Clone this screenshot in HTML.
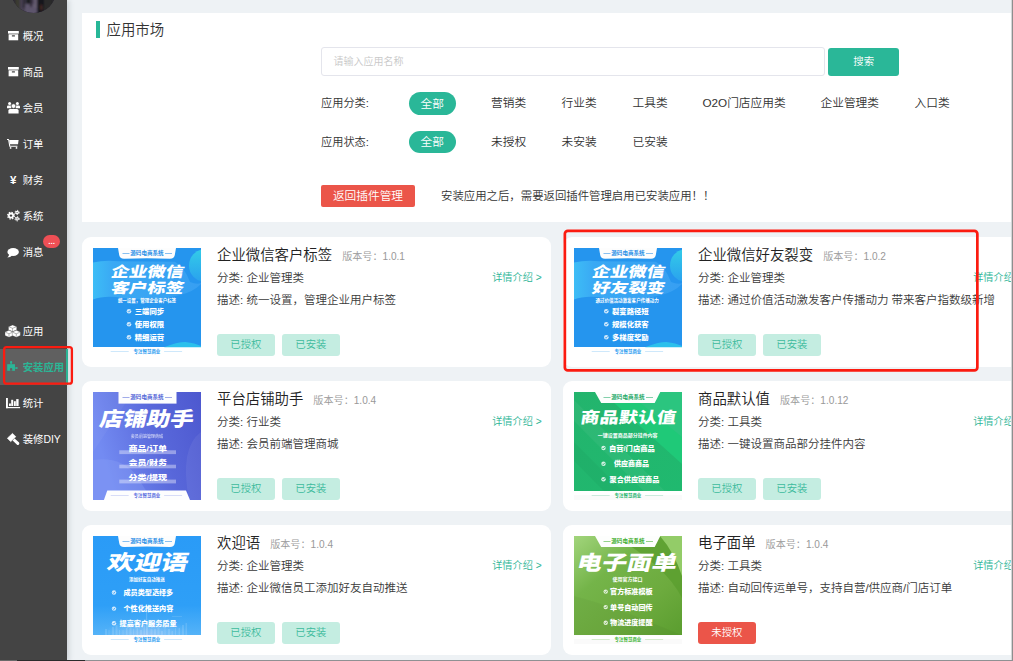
<!DOCTYPE html>
<html lang="zh-CN">
<head>
<meta charset="utf-8">
<title>应用市场</title>
<style>
*{box-sizing:border-box;margin:0;padding:0}
html,body{width:1013px;height:661px;overflow:hidden}
body{position:relative;background:#eef2f5;font-family:"Liberation Sans","Noto Sans CJK SC",sans-serif;color:#333;font-size:10.8px;font-weight:350}
.abs{position:absolute}
/* sidebar */
#side{position:absolute;left:0;top:0;width:67px;height:661px;background:#444;box-shadow:2px 0 5px rgba(120,130,140,.28)}
#avatar{position:absolute;left:10.5px;top:-32.5px;width:45.3px;height:45.3px;border-radius:50%;overflow:hidden;background:#2a2733}
.nav{position:absolute;left:0;width:67px;height:36px;color:#fff;font-size:10.4px;line-height:36px;font-weight:400}
.nav svg{position:absolute;fill:currentColor;overflow:visible}
.nav .yen{position:absolute;left:10px;top:-1px;font-size:11.5px;font-weight:700;font-family:"Liberation Sans",sans-serif}
.nav span{position:absolute;left:22.7px;top:0.8px;white-space:nowrap}
.nav.on{background:#606060;color:#2bb596;border-right:2px solid #2bb596;font-weight:700;width:68px}
#badge{position:absolute;left:43px;top:234.8px;width:17.3px;height:13px;border-radius:6.5px;background:#ee4f55;color:#fff;font-size:8px;line-height:14px;text-align:center;font-weight:700}
/* top panel */
#panel{position:absolute;left:82px;top:13px;width:929px;height:209px;background:#fff}
#bar{position:absolute;left:96px;top:21px;width:3.8px;height:17px;background:#27b797}
#ttl{position:absolute;left:106.5px;top:19.5px;font-size:14.4px;line-height:21px;color:#333}
#inp{position:absolute;left:321px;top:47px;width:503.5px;height:29px;border:1px solid #e4e5ec;border-radius:3px;background:#fff;color:#c8c8c8;font-size:10px;line-height:27px;padding-left:11.5px}
#sbtn{position:absolute;left:828.3px;top:47.5px;width:70.7px;height:28.5px;background:#2ab798;border-radius:3px;color:#fff;font-size:10.4px;line-height:28.5px;text-align:center}
.lbl{position:absolute;left:321px;font-size:11.2px;line-height:22px;height:22px;color:#333;white-space:nowrap}
.it{position:absolute;font-size:11.7px;line-height:22px;height:22px;color:#333;white-space:nowrap}
.pill{position:absolute;left:408.5px;width:47.5px;height:22.5px;border-radius:12px;background:#2ab798;color:#fff;font-size:11.7px;line-height:22.5px;text-align:center}
#rbtn{position:absolute;left:321px;top:185px;width:94px;height:22px;border-radius:2px;background:#eb5549;color:#fff;font-size:11.7px;line-height:22px;text-align:center}
#note{position:absolute;left:441px;top:185px;font-size:11.4px;line-height:22px;color:#333;white-space:nowrap}
/* cards */
.card{position:absolute;width:469px;height:129.7px;background:#fff;border-radius:9px}
.card .t{position:absolute;left:135px;top:7px;font-size:14.4px;line-height:22px;color:#222;white-space:nowrap}
.card .t i{font-style:normal;font-size:10.1px;color:#999;margin-left:10px}
.card .l{position:absolute;left:135px;font-size:11.5px;line-height:22px;color:#3a3a3a;white-space:nowrap}
.card .more{position:absolute;left:410.2px;top:30px;font-size:10.2px;line-height:22px;color:#2bb596;white-space:nowrap}
.tag{position:absolute;top:97px;width:57.8px;height:21.5px;border-radius:3px;background:#c4ede1;color:#3dbb9d;font-size:10.4px;line-height:21.5px;text-align:center}
.tag.red{background:#eb5549;color:#fff}
.pic{position:absolute;left:11px;top:11px;width:108px;height:108px;overflow:hidden;background:#fff}
</style>
</head>
<body>
<!-- SIDEBAR -->
<div id="side">
  <div id="avatar"><svg width="46" height="46" viewBox="0 0 46 46"><defs><filter id="bl"><feGaussianBlur stdDeviation="1"/></filter></defs><rect width="46" height="46" fill="#2b2732"/><g filter="url(#bl)"><rect x="4" y="28" width="8" height="18" fill="#3b3a33"/><rect x="9" y="30" width="14" height="16" fill="#463f52"/><rect x="14" y="36" width="12" height="10" fill="#5d546c"/><rect x="23" y="28" width="3" height="12" fill="#655c70"/><rect x="26" y="30" width="7" height="16" fill="#19171c"/><rect x="29.8" y="37" width="1" height="5" fill="#6a3428"/><rect x="33" y="30" width="9" height="12" fill="#2c2b2a"/><rect x="12" y="30" width="2" height="10" fill="#25222a"/><rect x="19" y="30" width="2" height="9" fill="#2a2630"/><rect x="15" y="28" width="4" height="8" fill="#1d1b20"/></g></svg></div>
  <div class="nav" style="top:18.5px"><svg style="left:7.5px;top:12.5px;width:10.8px;height:9.3px" viewBox="0 0 108 93" preserveAspectRatio="none"><rect x="0" y="0" width="108" height="26"/><rect x="6" y="33" width="96" height="60"/><rect x="38" y="43" width="32" height="11" rx="5" fill="#444"/></svg><span>概况</span></div>
  <div class="nav" style="top:54.5px"><svg style="left:7.5px;top:12.5px;width:10.8px;height:9.3px" viewBox="0 0 108 93" preserveAspectRatio="none"><rect x="0" y="0" width="108" height="26"/><rect x="6" y="33" width="96" height="60"/><rect x="38" y="43" width="32" height="11" rx="5" fill="#444"/></svg><span>商品</span></div>
  <div class="nav" style="top:90.5px"><svg style="left:6.8px;top:11.3px;width:13.0px;height:11.6px" viewBox="0 0 130 116" preserveAspectRatio="none"><circle cx="26" cy="16" r="15"/><circle cx="104" cy="16" r="15"/><path d="M0 62V46Q0 34 12 34H44V62Z"/><path d="M130 62V46Q130 34 118 34H86V62Z"/><circle cx="65" cy="41" r="23" stroke="#444" stroke-width="6"/><path d="M14 115V86Q14 71 30 71H100Q116 71 116 86V115Z"/></svg><span>会员</span></div>
  <div class="nav" style="top:126.5px"><svg style="left:7.3px;top:12.4px;width:11.6px;height:9.7px" viewBox="0 0 100 84" preserveAspectRatio="none"><path d="M0 0H14L20 9L28 58H90V68H20L10 8H0Z"/><path d="M19 9H100L95 46H25Z"/><circle cx="31" cy="77" r="7.5"/><circle cx="82" cy="77" r="7.5"/></svg><span>订单</span></div>
  <div class="nav" style="top:162.5px"><b class="yen">¥</b><span>财务</span></div>
  <div class="nav" style="top:198.5px"><svg style="left:6.7px;top:11.4px;width:12.4px;height:11.3px" viewBox="0 0 124 113" preserveAspectRatio="none"><circle cx="40" cy="56" r="34" fill="none" stroke="currentColor" stroke-width="12" stroke-dasharray="14.69 12.02"/><circle cx="40" cy="56" r="30"/><circle cx="40" cy="56" r="12" fill="#444"/><circle cx="101" cy="25" r="21" fill="none" stroke="currentColor" stroke-width="10" stroke-dasharray="12.10 9.90"/><circle cx="101" cy="25" r="18"/><circle cx="101" cy="25" r="6" fill="#444"/><circle cx="101" cy="88" r="21" fill="none" stroke="currentColor" stroke-width="10" stroke-dasharray="12.10 9.90"/><circle cx="101" cy="88" r="18"/><circle cx="101" cy="88" r="6" fill="#444"/></svg><span>系统</span></div>
  <div class="nav" style="top:234.5px"><svg style="left:6.7px;top:13.0px;width:11.9px;height:9.5px" viewBox="0 0 120 95" preserveAspectRatio="none"><ellipse cx="62" cy="40" rx="58" ry="40"/><path d="M22 60Q20 84 4 94Q34 92 52 74Z"/></svg><span>消息</span></div>
  <div class="nav" style="top:313.0px"><svg style="left:5.2px;top:11.6px;width:15.3px;height:12.3px" viewBox="0 0 153 123" preserveAspectRatio="none"><polygon points="76.0,0.0 117.0,16.5 117.0,49.5 76.0,66.0 35.0,49.5 35.0,16.5" stroke="#444" stroke-width="3"/><line x1="76" y1="33" x2="110.9" y2="19.0" stroke="#444" stroke-width="5" opacity=".8"/><line x1="76" y1="33" x2="76.0" y2="61.1" stroke="#444" stroke-width="5" opacity=".8"/><line x1="76" y1="33" x2="41.1" y2="19.0" stroke="#444" stroke-width="5" opacity=".8"/><polygon points="40.0,53.0 80.0,70.5 80.0,105.5 40.0,123.0 0.0,105.5 0.0,70.5" stroke="#444" stroke-width="3"/><line x1="40" y1="88" x2="74.0" y2="73.1" stroke="#444" stroke-width="5" opacity=".8"/><line x1="40" y1="88" x2="40.0" y2="117.8" stroke="#444" stroke-width="5" opacity=".8"/><line x1="40" y1="88" x2="6.0" y2="73.1" stroke="#444" stroke-width="5" opacity=".8"/><polygon points="113.0,53.0 153.0,70.5 153.0,105.5 113.0,123.0 73.0,105.5 73.0,70.5" stroke="#444" stroke-width="3"/><line x1="113" y1="88" x2="147.0" y2="73.1" stroke="#444" stroke-width="5" opacity=".8"/><line x1="113" y1="88" x2="113.0" y2="117.8" stroke="#444" stroke-width="5" opacity=".8"/><line x1="113" y1="88" x2="79.0" y2="73.1" stroke="#444" stroke-width="5" opacity=".8"/></svg><span>应用</span></div>
  <div class="nav on" style="top:349.0px"><svg style="left:7.3px;top:11.9px;width:10.9px;height:10.0px" viewBox="0 0 109 100" preserveAspectRatio="none"><rect x="2" y="32" width="78" height="66"/><circle cx="41" cy="12.5" r="11.5"/><rect x="35" y="18" width="12" height="16"/><circle cx="97.5" cy="70.5" r="10"/><rect x="78" y="65" width="14" height="11"/><path d="M29.5 98V80Q29.5 70 41 70Q52.5 70 52.5 80V98Z" fill="#606060"/></svg><span>安装应用</span></div>
  <div class="nav" style="top:385.0px"><svg style="left:5.9px;top:12.8px;width:14.1px;height:10.2px" viewBox="0 0 141 102" preserveAspectRatio="none"><rect x="0" y="0" width="19" height="102"/><rect x="0" y="90" width="141" height="12"/><rect x="30" y="55" width="19" height="25"/><rect x="52" y="18" width="20" height="62"/><rect x="79" y="32" width="19" height="48"/><rect x="102" y="11" width="24" height="69"/></svg><span>统计</span></div>
  <div class="nav" style="top:421.0px"><svg style="left:6.8px;top:11.9px;width:12.5px;height:12.0px" viewBox="0 0 125 120" preserveAspectRatio="none"><polygon points="4,52 55,4 88,37 37,86" stroke="currentColor" stroke-width="7" stroke-linejoin="round"/><path d="M56 76L76 56L121 96Q128 110 117 117Q105 124 98 115Z"/></svg><span>装修DIY</span></div>
  <div id="badge">...</div>
</div>
<!-- TOP PANEL -->
<div id="panel"></div>
<div id="bar"></div>
<div id="ttl">应用市场</div>
<div id="inp">请输入应用名称</div>
<div id="sbtn">搜索</div>

<div class="lbl" style="top:91.9px">应用分类:</div>
<div class="pill" style="top:91.9px;height:23px;line-height:23px">全部</div>
<div class="it" style="left:491px;top:91.9px">营销类</div>
<div class="it" style="left:561.5px;top:91.9px">行业类</div>
<div class="it" style="left:632.5px;top:91.9px">工具类</div>
<div class="it" style="left:702.5px;top:91.9px">O2O门店应用类</div>
<div class="it" style="left:820.5px;top:91.9px">企业管理类</div>
<div class="it" style="left:914.5px;top:91.9px">入口类</div>

<div class="lbl" style="top:130.5px">应用状态:</div>
<div class="pill" style="top:130.8px;height:22.3px;line-height:22.3px">全部</div>
<div class="it" style="left:491px;top:130.5px">未授权</div>
<div class="it" style="left:561.5px;top:130.5px">未安装</div>
<div class="it" style="left:632.5px;top:130.5px">已安装</div>

<div id="rbtn">返回插件管理</div>
<div id="note">安装应用之后，需要返回插件管理启用已安装应用！！</div>

<!-- CARDS -->
<div class="card" style="left:82px;top:237px">
  <div class="pic" id="p1"><svg width="108" height="108" viewBox="0 0 108 108" font-family="Liberation Sans,Noto Sans CJK SC,sans-serif"><defs><linearGradient id="cy1" x1="0" y1="0" x2="0" y2="1"><stop offset="0" stop-color="#33cbe8"/><stop offset="1" stop-color="#2aa2ee"/></linearGradient><linearGradient id="wv1" x1="0" y1="0" x2="1" y2="0"><stop offset="0" stop-color="#3dbdf6"/><stop offset=".18" stop-color="#3aa9f4"/><stop offset="1" stop-color="#379ff2"/></linearGradient></defs><rect width="108" height="108" fill="#fff"/><rect width="108" height="99" fill="#2595ee"/><path d="M0 14.4Q12 12 25 13.3L82 13.8Q92 20 97 34Q104 37 108 35V36Q100 44 87 47Q60 54 30 50Q12 47 0 51.5Z" fill="url(#wv1)"/><ellipse cx="111" cy="17.5" rx="15" ry="16" fill="url(#cy1)"/><path d="M71 99.3Q84 94 92.5 94Q102 95 108 98V99.3Z" fill="#2cc0ec"/><path d="M25 0H83L81.8 7Q81.3 10.6 77 10.8Q54 9.6 31 10.8Q26.7 10.6 26.2 7Z" fill="#fdfdfd"/><rect x="29.5" y="5" width="7" height=".55" fill="#2b8fe6"/><rect x="72" y="5" width="7" height=".55" fill="#2b8fe6"/><text x="37.29" y="7.23" font-size="5.42" font-weight="700" fill="#2b8fe6" textLength="33.32" lengthAdjust="spacingAndGlyphs">源码电商系统</text><text transform="skewX(-13)" x="23.78" y="28.66" font-size="14.69" font-weight="900" fill="#fff" textLength="72.73" lengthAdjust="spacingAndGlyphs">企业微信</text><text transform="skewX(-13)" x="27.55" y="45.02" font-size="14.06" font-weight="900" fill="#fff" textLength="72.85" lengthAdjust="spacingAndGlyphs">客户标签</text><text x="24.90" y="53.98" font-size="5.00" font-weight="700" fill="#fff" textLength="58.20" lengthAdjust="spacingAndGlyphs">统一设置，管理企业客户标签</text><circle cx="36" cy="63.2" r="2.3" fill="#fff" opacity=".8"/><path d="M34.85 63.20l0.87 0.97l1.61 -1.95" stroke="#2796ee" stroke-width=".8" fill="none"/><text x="41.76" y="66.26" font-size="7.08" font-weight="900" fill="#fff" textLength="29.48" lengthAdjust="spacingAndGlyphs">三端同步</text><circle cx="36" cy="76.2" r="2.3" fill="#fff" opacity=".8"/><path d="M34.85 76.20l0.87 0.97l1.61 -1.95" stroke="#2796ee" stroke-width=".8" fill="none"/><text x="41.75" y="79.13" font-size="7.29" font-weight="900" fill="#fff" textLength="29.49" lengthAdjust="spacingAndGlyphs">使用权限</text><circle cx="36" cy="89.3" r="2.3" fill="#fff" opacity=".8"/><path d="M34.85 89.30l0.87 0.97l1.61 -1.95" stroke="#2796ee" stroke-width=".8" fill="none"/><text x="41.76" y="92.16" font-size="7.08" font-weight="900" fill="#fff" textLength="29.48" lengthAdjust="spacingAndGlyphs">精细运营</text><rect x="17.7" y="103.4" width="18" height=".55" fill="#a6d6f7"/><rect x="71.1" y="103.4" width="18" height=".55" fill="#a6d6f7"/><text x="40.61" y="105.14" font-size="4.37" font-weight="700" fill="#2b9cf0" textLength="26.68" lengthAdjust="spacingAndGlyphs">专注智慧商业</text></svg></div>
  <div class="t">企业微信客户标签<i>版本号：1.0.1</i></div>
  <div class="l" style="top:30px">分类: 企业管理类</div>
  <div class="l" style="top:52px">描述: 统一设置，管理企业用户标签</div>
  <div class="more">详情介绍 &gt;</div>
  <div class="tag" style="left:135px">已授权</div>
  <div class="tag" style="left:200px">已安装</div>
</div>
<div class="card" style="left:563px;top:237px">
  <div class="pic" id="p2"><svg width="108" height="108" viewBox="0 0 108 108" font-family="Liberation Sans,Noto Sans CJK SC,sans-serif"><defs><linearGradient id="cy2" x1="0" y1="0" x2="0" y2="1"><stop offset="0" stop-color="#33cbe8"/><stop offset="1" stop-color="#2aa2ee"/></linearGradient><linearGradient id="wv2" x1="0" y1="0" x2="1" y2="0"><stop offset="0" stop-color="#3dbdf6"/><stop offset=".18" stop-color="#3aa9f4"/><stop offset="1" stop-color="#379ff2"/></linearGradient></defs><rect width="108" height="108" fill="#fff"/><rect width="108" height="99" fill="#2595ee"/><path d="M0 14.4Q12 12 25 13.3L82 13.8Q92 20 97 34Q104 37 108 35V36Q100 44 87 47Q60 54 30 50Q12 47 0 51.5Z" fill="url(#wv2)"/><ellipse cx="111" cy="17.5" rx="15" ry="16" fill="url(#cy2)"/><path d="M71 99.3Q84 94 92.5 94Q102 95 108 98V99.3Z" fill="#2cc0ec"/><path d="M25 0H83L81.8 7Q81.3 10.6 77 10.8Q54 9.6 31 10.8Q26.7 10.6 26.2 7Z" fill="#fdfdfd"/><rect x="29.5" y="5" width="7" height=".55" fill="#2b8fe6"/><rect x="72" y="5" width="7" height=".55" fill="#2b8fe6"/><text x="37.29" y="7.23" font-size="5.42" font-weight="700" fill="#2b8fe6" textLength="33.32" lengthAdjust="spacingAndGlyphs">源码电商系统</text><text transform="skewX(-13)" x="23.78" y="28.66" font-size="14.69" font-weight="900" fill="#fff" textLength="72.73" lengthAdjust="spacingAndGlyphs">企业微信</text><text transform="skewX(-13)" x="27.55" y="45.02" font-size="14.06" font-weight="900" fill="#fff" textLength="72.85" lengthAdjust="spacingAndGlyphs">好友裂变</text><text x="21.40" y="53.98" font-size="5.00" font-weight="700" fill="#fff" textLength="63.40" lengthAdjust="spacingAndGlyphs">通过价值活动激发客户传播动力</text><circle cx="32.3" cy="63.2" r="2.3" fill="#fff" opacity=".8"/><path d="M31.15 63.20l0.87 0.97l1.61 -1.95" stroke="#2796ee" stroke-width=".8" fill="none"/><text x="38.06" y="66.26" font-size="7.08" font-weight="900" fill="#fff" textLength="36.58" lengthAdjust="spacingAndGlyphs">裂变路径短</text><circle cx="32.3" cy="76.2" r="2.3" fill="#fff" opacity=".8"/><path d="M31.15 76.20l0.87 0.97l1.61 -1.95" stroke="#2796ee" stroke-width=".8" fill="none"/><text x="38.05" y="79.13" font-size="7.29" font-weight="900" fill="#fff" textLength="36.59" lengthAdjust="spacingAndGlyphs">规模化获客</text><circle cx="32.3" cy="89.3" r="2.3" fill="#fff" opacity=".8"/><path d="M31.15 89.30l0.87 0.97l1.61 -1.95" stroke="#2796ee" stroke-width=".8" fill="none"/><text x="38.06" y="92.16" font-size="7.08" font-weight="900" fill="#fff" textLength="36.58" lengthAdjust="spacingAndGlyphs">多梯度奖励</text><rect x="17.7" y="103.4" width="18" height=".55" fill="#a6d6f7"/><rect x="71.1" y="103.4" width="18" height=".55" fill="#a6d6f7"/><text x="40.61" y="105.14" font-size="4.37" font-weight="700" fill="#2b9cf0" textLength="26.68" lengthAdjust="spacingAndGlyphs">专注智慧商业</text></svg></div>
  <div class="t">企业微信好友裂变<i>版本号：1.0.2</i></div>
  <div class="l" style="top:30px">分类: 企业管理类</div>
  <div class="l" style="top:52px">描述: 通过价值活动激发客户传播动力 带来客户指数级新增</div>
  <div class="more">详情介绍 &gt;</div>
  <div class="tag" style="left:135px">已授权</div>
  <div class="tag" style="left:200px">已安装</div>
</div>
<div class="card" style="left:82px;top:381px">
  <div class="pic" id="p3"><svg width="108" height="108" viewBox="0 0 108 108" font-family="Liberation Sans,Noto Sans CJK SC,sans-serif"><defs><linearGradient id="pg" x1="0" y1=".3" x2="1" y2="0"><stop offset="0" stop-color="#738bf2"/><stop offset=".55" stop-color="#5867da"/><stop offset="1" stop-color="#4d58cf"/></linearGradient></defs><rect width="108" height="108" fill="url(#pg)"/><path d="M0 68Q28 64 44 84Q52 98 60 108H0Z" fill="#8aa0f6" opacity=".35"/><path d="M108 40Q86 56 96 108H108Z" fill="#fff" opacity=".06"/><path d="M0 0H40L0 60Z" fill="#fff" opacity=".04"/><rect x="25.5" y="0" width="58" height="11.6" fill="#fdfdfe"/><rect x="29.5" y="5" width="7" height=".55" fill="#5568d8"/><rect x="72" y="5" width="7" height=".55" fill="#5568d8"/><text x="37.29" y="7.23" font-size="5.42" font-weight="700" fill="#5568d8" textLength="33.32" lengthAdjust="spacingAndGlyphs">源码电商系统</text><text transform="skewX(-13)" x="13.38" y="34.21" font-size="19.90" font-weight="900" fill="#fff" textLength="93.99" lengthAdjust="spacingAndGlyphs">店铺助手</text><text x="37.82" y="46.16" font-size="4.17" font-weight="500" fill="#fff" opacity="0.7" textLength="32.27" lengthAdjust="spacingAndGlyphs">会员前端管理商城</text><rect x="26.3" y="58.3" width="56.7" height="3.8" fill="#fff" opacity=".38"/><text x="35.55" y="58.82" font-size="7.40" font-weight="900" fill="#fff" textLength="38.60" lengthAdjust="spacingAndGlyphs">商品/订单</text><rect x="26.3" y="72.7" width="56.7" height="3.6" fill="#fff" opacity=".38"/><text x="35.55" y="73.23" font-size="7.29" font-weight="900" fill="#fff" textLength="38.59" lengthAdjust="spacingAndGlyphs">会员/财务</text><rect x="26.3" y="87.6" width="56.7" height="3.8" fill="#fff" opacity=".38"/><text x="35.56" y="88.35" font-size="7.19" font-weight="900" fill="#fff" textLength="38.59" lengthAdjust="spacingAndGlyphs">分类/提现</text><path d="M14.3 98.5H93L97 108H10.9Z" fill="#fdfdfe"/><rect x="17.7" y="103.4" width="18" height=".55" fill="#b9c2f3"/><rect x="71.1" y="103.4" width="18" height=".55" fill="#b9c2f3"/><text x="40.61" y="105.14" font-size="4.37" font-weight="700" fill="#5a6cde" textLength="26.68" lengthAdjust="spacingAndGlyphs">专注智慧商业</text></svg></div>
  <div class="t">平台店铺助手<i>版本号：1.0.4</i></div>
  <div class="l" style="top:30px">分类: 行业类</div>
  <div class="l" style="top:52px">描述: 会员前端管理商城</div>
  <div class="more">详情介绍 &gt;</div>
  <div class="tag" style="left:135px">已授权</div>
  <div class="tag" style="left:200px">已安装</div>
</div>
<div class="card" style="left:563px;top:381px">
  <div class="pic" id="p4"><svg width="108" height="108" viewBox="0 0 108 108" font-family="Liberation Sans,Noto Sans CJK SC,sans-serif"><defs><linearGradient id="gg" x1="0" y1="0" x2="1" y2="1"><stop offset="0" stop-color="#23b46d"/><stop offset="1" stop-color="#20b96f"/></linearGradient></defs><rect width="108" height="108" fill="#fafafa"/><rect width="108" height="103" fill="#fff"/><rect width="108" height="99" fill="url(#gg)"/><path d="M28 0H108V72Z" fill="#1fc978"/><path d="M53 0H108V45Z" fill="#2bc57f"/><path d="M0 8L91 99.3H70L0 29Z" fill="#fff" opacity=".05"/><path d="M0 50L49 99.3H30L0 69Z" fill="#000" opacity=".03"/><path d="M21 0H86.3L80.7 11H27.2Z" fill="#fdfefd"/><rect x="29.5" y="5" width="7" height=".55" fill="#1fa968"/><rect x="72" y="5" width="7" height=".55" fill="#1fa968"/><text x="37.29" y="7.23" font-size="5.42" font-weight="700" fill="#1fa968" textLength="33.32" lengthAdjust="spacingAndGlyphs">源码电商系统</text><text transform="skewX(-9)" x="10.69" y="30.56" font-size="15.63" font-weight="900" fill="#fff" textLength="95.55" lengthAdjust="spacingAndGlyphs">商品默认值</text><text x="23.80" y="45.27" font-size="5.00" font-weight="700" fill="#fff" textLength="59.80" lengthAdjust="spacingAndGlyphs">一键设置商品部分挂件内容</text><circle cx="29.5" cy="56" r="2.2" fill="#fff" opacity=".8"/><path d="M28.40 56.00l0.84 0.92l1.54 -1.87" stroke="#22b46e" stroke-width=".8" fill="none"/><text x="34.96" y="58.86" font-size="7.08" font-weight="900" fill="#fff" textLength="45.88" lengthAdjust="spacingAndGlyphs">自营/门店商品</text><circle cx="29.5" cy="71.8" r="2.2" fill="#fff" opacity=".8"/><path d="M28.40 71.80l0.84 0.92l1.54 -1.87" stroke="#22b46e" stroke-width=".8" fill="none"/><text x="40.06" y="74.49" font-size="6.77" font-weight="900" fill="#fff" textLength="35.07" lengthAdjust="spacingAndGlyphs">供应商商品</text><circle cx="29.5" cy="87.2" r="2.2" fill="#fff" opacity=".8"/><path d="M28.40 87.20l0.84 0.92l1.54 -1.87" stroke="#22b46e" stroke-width=".8" fill="none"/><text x="35.57" y="89.90" font-size="6.67" font-weight="900" fill="#fff" textLength="49.77" lengthAdjust="spacingAndGlyphs">聚合供应链商品</text><rect x="17.7" y="103.4" width="18" height=".55" fill="#a5dcc3"/><rect x="71.1" y="103.4" width="18" height=".55" fill="#a5dcc3"/><text x="40.61" y="105.14" font-size="4.37" font-weight="700" fill="#1fb46c" textLength="26.68" lengthAdjust="spacingAndGlyphs">专注智慧商业</text></svg></div>
  <div class="t">商品默认值<i>版本号：1.0.12</i></div>
  <div class="l" style="top:30px">分类: 工具类</div>
  <div class="l" style="top:52px">描述: 一键设置商品部分挂件内容</div>
  <div class="more">详情介绍 &gt;</div>
  <div class="tag" style="left:135px">已授权</div>
  <div class="tag" style="left:200px">已安装</div>
</div>
<div class="card" style="left:82px;top:525px">
  <div class="pic" id="p5"><svg width="108" height="108" viewBox="0 0 108 108" font-family="Liberation Sans,Noto Sans CJK SC,sans-serif"><defs><linearGradient id="wg" x1="0" y1="0" x2="0" y2="1"><stop offset="0" stop-color="#2a9bf7"/><stop offset=".7" stop-color="#2e9ff7"/><stop offset="1" stop-color="#55b3f8"/></linearGradient><radialGradient id="wr" cx="50%" cy="100%" r="50%"><stop offset="0" stop-color="#e9d9f5" stop-opacity=".4"/><stop offset="1" stop-color="#fff" stop-opacity="0"/></radialGradient></defs><rect width="108" height="108" fill="#fff"/><rect width="108" height="99" fill="url(#wg)"/><rect x="10" y="66" width="88" height="33.3" fill="url(#wr)"/><rect x="12" y="93" width="2" height="6" fill="#fff" opacity=".13"/><rect x="15.5" y="94" width="1" height="5" fill="#fff" opacity=".13"/><rect x="19" y="91" width="2" height="8" fill="#fff" opacity=".13"/><rect x="22.5" y="89" width="2" height="10" fill="#fff" opacity=".13"/><rect x="26" y="94" width="1" height="5" fill="#fff" opacity=".13"/><rect x="29.5" y="94" width="1" height="5" fill="#fff" opacity=".13"/><rect x="33" y="92" width="1.5" height="7" fill="#fff" opacity=".13"/><rect x="36.5" y="91" width="2" height="8" fill="#fff" opacity=".13"/><rect x="40" y="93" width="1" height="6" fill="#fff" opacity=".13"/><rect x="43.5" y="87" width="1.5" height="12" fill="#fff" opacity=".13"/><rect x="47" y="94" width="2" height="5" fill="#fff" opacity=".13"/><rect x="50.5" y="89" width="1.5" height="10" fill="#fff" opacity=".13"/><rect x="54" y="87" width="1" height="12" fill="#fff" opacity=".13"/><rect x="57.5" y="93" width="2" height="6" fill="#fff" opacity=".13"/><rect x="61" y="93" width="2" height="6" fill="#fff" opacity=".13"/><rect x="64.5" y="89" width="2" height="10" fill="#fff" opacity=".13"/><rect x="68" y="95" width="2" height="4" fill="#fff" opacity=".13"/><rect x="71.5" y="92" width="1" height="7" fill="#fff" opacity=".13"/><rect x="75" y="93" width="2" height="6" fill="#fff" opacity=".13"/><rect x="78.5" y="95" width="1.5" height="4" fill="#fff" opacity=".13"/><rect x="82" y="92" width="1" height="7" fill="#fff" opacity=".13"/><rect x="85.5" y="92" width="1.5" height="7" fill="#fff" opacity=".13"/><rect x="89" y="89" width="2" height="10" fill="#fff" opacity=".13"/><rect x="92.5" y="87" width="1.5" height="12" fill="#fff" opacity=".13"/><rect x="53.3" y="68" width=".8" height="31" fill="#fff" opacity=".25"/><rect x="79" y="80" width="10" height=".6" fill="#fff" opacity=".2"/><path d="M25 0H83L81.8 7Q81.3 10.8 77 11Q54 9.8 31 11Q26.7 10.8 26.2 7Z" fill="#fdfdfd"/><rect x="29.5" y="5" width="7" height=".55" fill="#2b8fe6"/><rect x="72" y="5" width="7" height=".55" fill="#2b8fe6"/><text x="37.29" y="7.23" font-size="5.42" font-weight="700" fill="#2b8fe6" textLength="33.32" lengthAdjust="spacingAndGlyphs">源码电商系统</text><text transform="skewX(-14)" x="21.63" y="34.09" font-size="21.04" font-weight="900" fill="#fff" textLength="80.41" lengthAdjust="spacingAndGlyphs">欢迎语</text><text x="35.91" y="44.52" font-size="4.58" font-weight="700" fill="#fff" textLength="35.88" lengthAdjust="spacingAndGlyphs">添加好友自动推送</text><circle cx="21" cy="56.5" r="2.2" fill="#fff" opacity=".8"/><path d="M19.90 56.50l0.84 0.92l1.54 -1.87" stroke="#2a9bf6" stroke-width=".8" fill="none"/><text x="30.47" y="58.92" font-size="6.46" font-weight="900" fill="#fff" textLength="49.76" lengthAdjust="spacingAndGlyphs">成员类型选择多</text><circle cx="21" cy="72.6" r="2.2" fill="#fff" opacity=".8"/><path d="M19.90 72.60l0.84 0.92l1.54 -1.87" stroke="#2a9bf6" stroke-width=".8" fill="none"/><text x="30.47" y="75.30" font-size="6.67" font-weight="900" fill="#fff" textLength="49.77" lengthAdjust="spacingAndGlyphs">个性化推送内容</text><circle cx="21" cy="87.2" r="2.2" fill="#fff" opacity=".8"/><path d="M19.90 87.20l0.84 0.92l1.54 -1.87" stroke="#2a9bf6" stroke-width=".8" fill="none"/><text x="26.57" y="89.92" font-size="6.46" font-weight="900" fill="#fff" textLength="57.06" lengthAdjust="spacingAndGlyphs">提高客户服务质量</text><rect x="17.7" y="103.4" width="18" height=".55" fill="#a6d6f7"/><rect x="71.1" y="103.4" width="18" height=".55" fill="#a6d6f7"/><text x="40.61" y="105.14" font-size="4.37" font-weight="700" fill="#2b9cf0" textLength="26.68" lengthAdjust="spacingAndGlyphs">专注智慧商业</text></svg></div>
  <div class="t">欢迎语<i>版本号：1.0.4</i></div>
  <div class="l" style="top:30px">分类: 企业管理类</div>
  <div class="l" style="top:52px">描述: 企业微信员工添加好友自动推送</div>
  <div class="more">详情介绍 &gt;</div>
  <div class="tag" style="left:135px">已授权</div>
  <div class="tag" style="left:200px">已安装</div>
</div>
<div class="card" style="left:563px;top:525px">
  <div class="pic" id="p6"><svg width="108" height="108" viewBox="0 0 108 108" font-family="Liberation Sans,Noto Sans CJK SC,sans-serif"><defs><linearGradient id="bg6" x1="0" y1="0" x2=".9" y2="1"><stop offset="0" stop-color="#a2d57c"/><stop offset=".35" stop-color="#74b449"/><stop offset=".7" stop-color="#6dab3e"/><stop offset="1" stop-color="#5d9f31"/></linearGradient></defs><rect width="108" height="108" fill="#fafafa"/><rect width="108" height="103" fill="#fff"/><rect width="108" height="99" fill="url(#bg6)"/><path d="M40 0H108V62Q92 30 40 0Z" fill="#5a9e2d" opacity=".75"/><path d="M86 0H108V40Q100 16 86 0Z" fill="#93cc68"/><path d="M0 60Q40 70 108 99.3H0Z" fill="#000" opacity=".03"/><path d="M21 0H86.3L80.7 11H27.2Z" fill="#fdfefd"/><rect x="29.5" y="5" width="7" height=".55" fill="#3fae2f"/><rect x="72" y="5" width="7" height=".55" fill="#3fae2f"/><text x="37.29" y="7.23" font-size="5.42" font-weight="700" fill="#3fae2f" textLength="33.32" lengthAdjust="spacingAndGlyphs">源码电商系统</text><text transform="skewX(-14)" x="10.24" y="34.16" font-size="20.42" font-weight="900" fill="#fff" textLength="99.93" lengthAdjust="spacingAndGlyphs">电子面单</text><text x="38.60" y="45.27" font-size="5.00" font-weight="700" fill="#fff" textLength="29.80" lengthAdjust="spacingAndGlyphs">使用官方接口</text><circle cx="31.7" cy="55.6" r="2.2" fill="#fff" opacity=".8"/><path d="M30.60 55.60l0.84 0.92l1.54 -1.87" stroke="#63ae3b" stroke-width=".8" fill="none"/><text x="36.07" y="58.30" font-size="6.67" font-weight="900" fill="#fff" textLength="42.47" lengthAdjust="spacingAndGlyphs">官方标准模板</text><circle cx="31.7" cy="71.1" r="2.2" fill="#fff" opacity=".8"/><path d="M30.60 71.10l0.84 0.92l1.54 -1.87" stroke="#63ae3b" stroke-width=".8" fill="none"/><text x="36.07" y="73.80" font-size="6.67" font-weight="900" fill="#fff" textLength="42.47" lengthAdjust="spacingAndGlyphs">单号自动回传</text><circle cx="31.7" cy="86.7" r="2.2" fill="#fff" opacity=".8"/><path d="M30.60 86.70l0.84 0.92l1.54 -1.87" stroke="#63ae3b" stroke-width=".8" fill="none"/><text x="36.07" y="89.11" font-size="6.56" font-weight="900" fill="#fff" textLength="42.46" lengthAdjust="spacingAndGlyphs">物流进度提醒</text><rect x="17.7" y="103.4" width="18" height=".55" fill="#b4dfa8"/><rect x="71.1" y="103.4" width="18" height=".55" fill="#b4dfa8"/><text x="40.61" y="105.14" font-size="4.37" font-weight="700" fill="#3fb535" textLength="26.68" lengthAdjust="spacingAndGlyphs">专注智慧商业</text></svg></div>
  <div class="t">电子面单<i>版本号：1.0.4</i></div>
  <div class="l" style="top:30px">分类: 工具类</div>
  <div class="l" style="top:52px">描述: 自动回传运单号，支持自营/供应商/门店订单</div>
  <div class="more">详情介绍 &gt;</div>
  <div class="tag red" style="left:135px">未授权</div>
</div>

<!-- annotations / edges -->
<svg class="abs" style="left:0;top:0;pointer-events:none" width="1013" height="661" viewBox="0 0 1013 661" fill="none" stroke="#fb1b10">
<rect x="564.85" y="230.85" width="412.5" height="139.6" rx="3" stroke-width="2.7"/>
<rect x="4.1" y="347.1" width="67.8" height="36.6" rx="2.5" stroke-width="2.3"/>
</svg>
<div class="abs" style="left:1011px;top:0;width:1px;height:661px;background:#d4d6d8"></div>
<div class="abs" style="left:1012px;top:0;width:1px;height:661px;background:#8e8e8e"></div>
<div class="abs" style="left:0;top:659.6px;width:1013px;height:1.4px;background:#8f9193"></div>
<div class="abs" style="left:0;top:659.6px;width:17px;height:1.4px;background:#6a6a6a"></div>
<div class="abs" style="left:17px;top:659.6px;width:68px;height:1.4px;background:#2b2b2b"></div>
</body>
</html>
